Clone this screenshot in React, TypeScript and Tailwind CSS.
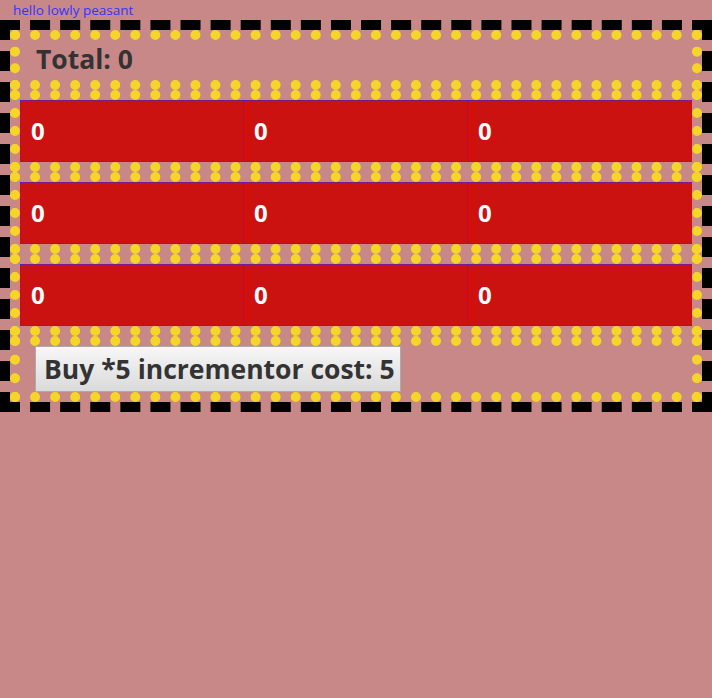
import React from "react";

const font = { fontFamily: '"Open Sans", "DejaVu Sans", sans-serif' };

function Row() {
  return (
    <div className="border-[10px] border-dotted border-[#f5d528]">
      <div className="grid grid-cols-3 h-[62px]">
        {[0, 1, 2].map((i) => (
          <div
            key={i}
            className={`bg-[#cc1111] border-y border-dotted border-[#3322ff] ${i === 0 ? "border-l" : ""} ${i === 2 ? "" : "border-r"} flex items-center pl-[10px] text-white font-bold text-[24px]`}
          >
            0
          </div>
        ))}
      </div>
    </div>
  );
}

export default function App() {
  return (
    <div className="min-h-screen bg-[#c98888]" style={font}>
      <div className="h-5 pl-[13px] text-[13.5px] leading-5 text-[#3333ff]">hello lowly peasant</div>
      <div className="border-[10px] border-dashed border-black">
        <div className="border-[10px] border-dotted border-[#f5d528] h-[60px] flex items-center pl-[16px] text-[26.5px] font-bold text-[#333333]">
          Total: 0
        </div>
        <Row />
        <Row />
        <Row />
        <div className="border-[10px] border-dotted border-[#f5d528] h-[66px] pl-[15px]">
          <button className="h-[46px] w-[366px] px-[8px] border border-[#aaaaaa] bg-gradient-to-b from-[#f7f7f7] to-[#dadada] text-[26.5px] font-bold text-[#333333] leading-none whitespace-nowrap">
            Buy *5 incrementor cost: 5
          </button>
        </div>
      </div>
    </div>
  );
}
